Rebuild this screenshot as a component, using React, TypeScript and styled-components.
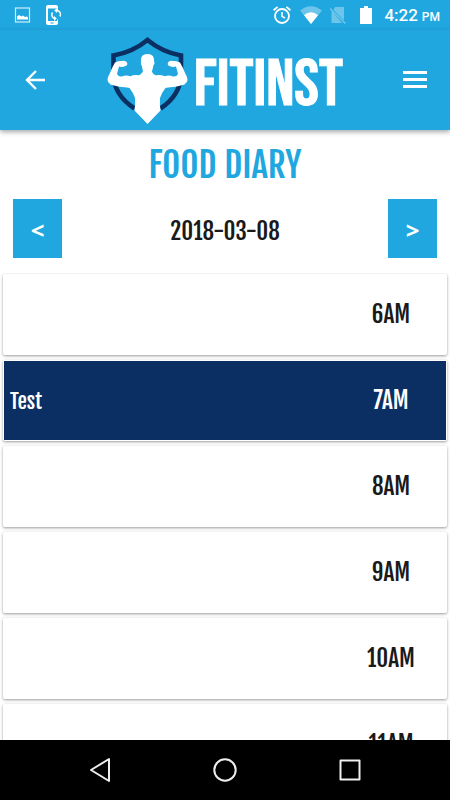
import React from "react";
import styled, { createGlobalStyle } from "styled-components";

const blue = "#20a7e0";
const navy = "#0b2f63";
const condensed = '"Fjalla One", "Liberation Sans Narrow", "Roboto", sans-serif';

const GlobalStyle = createGlobalStyle`
  * { box-sizing: border-box; }
  body { margin: 0; background: #fff; font-family: ${condensed}; color: #1a1a1a; }
  button { border: 0; padding: 0; background: none; color: inherit; font: inherit; cursor: pointer; }
  svg { display: block; }
`;

const Screen = styled.div`
  display: flex;
  flex-direction: column;
  height: 100vh;
  overflow: hidden;
`;

const StatusBar = styled.div`
  display: flex;
  justify-content: space-between;
  align-items: center;
  flex: none;
  height: 30px;
  padding: 0 10px 0 12px;
  background: ${blue};
  color: #fff;
`;

const StatusGroup = styled.div<{ $gap: number }>`
  display: flex;
  align-items: center;
  gap: ${(p) => p.$gap}px;
`;

const Clock = styled.time`
  margin-left: 4px;
  padding-top: 2px;
  font: 500 17px/28px "Roboto", sans-serif;
  white-space: nowrap;
`;

const Meridiem = styled.span`
  margin-left: 4px;
  font-size: 12px;
`;

const Header = styled.header`
  display: flex;
  align-items: center;
  justify-content: space-between;
  flex: none;
  height: 100px;
  padding: 0 15px;
  background: ${blue};
  color: #fff;
  box-shadow: 0 2px 5px rgba(0, 0, 0, 0.35);
  z-index: 1;
`;

const IconButton = styled.button`
  display: grid;
  place-items: center;
  width: 40px;
  height: 40px;
`;

const Brand = styled.div`
  display: flex;
  align-items: center;
  gap: 6px;
`;

const BrandName = styled.span`
  padding-top: 12px;
  font-family: "Bebas Neue", ${condensed};
  font-size: 66px;
  line-height: 80px;
  font-weight: 400;
  -webkit-text-stroke: 1px #fff;
`;

const Title = styled.h1`
  flex: none;
  margin: 0;
  padding-top: 12px;
  color: ${blue};
  font-size: 35px;
  line-height: 46px;
  font-weight: 400;
  text-align: center;
`;

const DateRow = styled.div`
  display: flex;
  align-items: center;
  justify-content: space-between;
  flex: none;
  padding: 11px 13px 15px;
`;

const StepButton = styled.button`
  width: 49px;
  height: 59px;
  padding-top: 2px;
  background: ${blue};
  color: #fff;
  font: 700 24px/57px "Open Sans", sans-serif;
`;

const CurrentDate = styled.time`
  padding-top: 6px;
  font-size: 23px;
  line-height: 32px;
`;

const Slots = styled.ul`
  display: flex;
  flex-direction: column;
  gap: 5px;
  flex: 1;
  min-height: 0;
  margin: 0;
  padding: 1px 3px 0;
  overflow-y: auto;
  scrollbar-width: none;
  list-style: none;
`;

const Slot = styled.li`
  flex: none;
  height: 81px;
  padding: 1px;
  border-radius: 2px;
  background: #fff;
  box-shadow: 0 1px 3px rgba(0, 0, 0, 0.4);
`;

const SlotBody = styled.div<{ $filled: boolean }>`
  display: flex;
  align-items: center;
  height: 100%;
  padding-left: 6px;
  background: ${(p) => (p.$filled ? navy : "#fff")};
  color: ${(p) => (p.$filled ? "#fff" : "#1a1a1a")};
`;

const Entry = styled.span`
  flex: 1;
  font-size: 21px;
  line-height: 32px;
`;

const Hour = styled.span`
  width: 110px;
  font-size: 23px;
  line-height: 32px;
  text-align: center;
`;

const NavBar = styled.nav`
  display: flex;
  align-items: center;
  justify-content: center;
  gap: 85px;
  flex: none;
  height: 60px;
  background: #000;
  z-index: 1;
`;

const slots = [
  { hour: "6AM", entry: "" },
  { hour: "7AM", entry: "Test" },
  { hour: "8AM", entry: "" },
  { hour: "9AM", entry: "" },
  { hour: "10AM", entry: "" },
  { hour: "11AM", entry: "" },
];

function PictureIcon() {
  return (
    <svg width="20" height="20" viewBox="0 0 20 20" aria-hidden="true">
      <rect x="3.5" y="3" width="14" height="14" fill="none" stroke="#fff" strokeOpacity=".8" strokeWidth="1.2" />
      <path d="M5 14.500v-3l2-1.500 2.500 1.500 1.500-1 2 1.500 2-.500 1 1v2z" fill="#fff" />
    </svg>
  );
}

function PhoneSyncIcon() {
  return (
    <svg width="20" height="22" viewBox="0 0 20 22" aria-hidden="true">
      <path d="M14 6V4.500H5v12.500h9V15.500h1V19q0 2-2 2H5q-2 0-2-2V3q0-2 2-2h8q2 0 2 2v3z" fill="#fff" />
      <path
        d="M13.500 6.500a4 4 0 0 1 3.500 6M11.500 14.500a4 4 0 0 1-2-6"
        fill="none"
        stroke="#fff"
        strokeWidth="1.500"
      />
      <path d="M14 4v5l-2.800-2.500zM11 12v5l2.800-2.500z" fill="#fff" />
      <path d="M7.500 19h3" stroke={blue} />
    </svg>
  );
}

function AlarmIcon() {
  return (
    <svg width="20" height="20" viewBox="0 0 20 20" fill="none" stroke="#fff" aria-hidden="true">
      <circle cx="10" cy="11" r="7" strokeWidth="1.800" />
      <path d="M10 7v4.300l3 1.700" strokeWidth="1.500" />
      <path d="M1.600 5.200 5.600 1.900M18.400 5.200l-4-3.300" strokeWidth="1.800" />
    </svg>
  );
}

function WifiIcon() {
  return (
    <svg width="22" height="20" viewBox="0 0 22 20" fill="#fff" aria-hidden="true">
      <path d="M0 5.500Q11-3 22 5.500L11 19z" opacity=".35" />
      <path d="M4 10.200q7-6 14 0L11 19z" />
    </svg>
  );
}

function NoSimIcon() {
  return (
    <svg width="18" height="20" viewBox="0 0 18 20" opacity=".35" aria-hidden="true">
      <path d="M5 2h9v13.200L3.500 5zM1.500 5.500 12 18H1.500z" fill="#fff" />
      <path d="M0 3.500 15.500 18.500" stroke="#fff" strokeWidth="1.500" />
    </svg>
  );
}

function BatteryIcon() {
  return (
    <svg width="12" height="20" viewBox="0 0 12 20" fill="#fff" aria-hidden="true">
      <path d="M4 1h4v2h4v16H0V3h4z" />
    </svg>
  );
}

function BrandMark() {
  return (
    <svg width="81" height="90" viewBox="0 0 81 90" aria-hidden="true">
      <path
        d="M27.500 73.500Q7 60 6.500 40V20.500Q26 17 40.500 5Q55 17 74 20.500V40Q73.500 60 53.500 73.500"
        fill="none"
        stroke={navy}
        strokeWidth="4.600"
      />
      <path
        d="M40.500 19c5 0 7 3 6.500 7.500 1 .5.500 3-.7 4-.3 3-1 4.500-1.300 6 .5 2 2 3.200 4 3.700q5.500-.700 8.500 1 5-1.500 8.500.300 3.500.500 5-2.500l-2-7.500q-3 1-6.500-.5-2.500-1-1.500-3.500 1.500-2.500 5-1.500 4-.5 7 1.500 3 5 5 10.500 2.500 4 2.500 7 0 2.500-3 4.500-8 2-11.500 2.500-6 .5-7.500 1-4 5-5.500 10-.5 7 .5 12.500L40.500 89 27.500 75.500q1-5.500.5-12.500-1.500-5-5.500-10-1.500-.5-7.500-1Q11 51.500 3.500 49.500.500 47.500.500 45q0-3 2.500-7 2-5.500 5-10.500 3-2 7-1.500 3.500-1 5 1.500 1 2.500-1.500 3.500-3.500 1.500-6.500.5l-2 7.500q1.500 3 5 2.500 3.500-1.800 8.500-.3 3-1.700 8.500-1 2-.5 4-3.700-.3-1.500-1.300-6-1.200-1-.7-4C33.500 22 35.500 19 40.500 19z"
        fill="#fff"
      />
    </svg>
  );
}

export default function App() {
  return (
    <>
      <GlobalStyle />
      <Screen>
        <StatusBar>
          <StatusGroup $gap={11}>
            <PictureIcon />
            <PhoneSyncIcon />
          </StatusGroup>
          <StatusGroup $gap={12}>
            <StatusGroup $gap={8}>
              <AlarmIcon />
              <WifiIcon />
              <NoSimIcon />
            </StatusGroup>
            <StatusGroup $gap={8}>
              <BatteryIcon />
              <Clock>
                4:22<Meridiem>PM</Meridiem>
              </Clock>
            </StatusGroup>
          </StatusGroup>
        </StatusBar>

        <Header>
          <IconButton aria-label="Back">
            <svg width="20" height="20" viewBox="0 0 20 20" fill="none" stroke="#fff" strokeWidth="2.400" aria-hidden="true">
              <path d="M20 10H2M11 1l-9 9 9 9" />
            </svg>
          </IconButton>
          <Brand>
            <BrandMark />
            <BrandName>FITINST</BrandName>
          </Brand>
          <IconButton aria-label="Menu">
            <svg width="24" height="18" viewBox="0 0 24 18" fill="#fff" aria-hidden="true">
              <path d="M0 0h24v3H0zM0 7h24v3H0zM0 14h24v3H0z" />
            </svg>
          </IconButton>
        </Header>

        <Title>FOOD DIARY</Title>
        <DateRow>
          <StepButton aria-label="Previous day">&lt;</StepButton>
          <CurrentDate dateTime="2018-03-08">2018-03-08</CurrentDate>
          <StepButton aria-label="Next day">&gt;</StepButton>
        </DateRow>

        <Slots>
          {slots.map((slot) => (
            <Slot key={slot.hour}>
              <SlotBody $filled={slot.entry !== ""}>
                <Entry>{slot.entry}</Entry>
                <Hour>{slot.hour}</Hour>
              </SlotBody>
            </Slot>
          ))}
        </Slots>

        <NavBar>
          <IconButton aria-label="System back">
            <svg width="24" height="26" viewBox="0 0 24 26" fill="none" stroke="#eee" strokeWidth="2" strokeLinejoin="round" aria-hidden="true">
              <path d="M21 2v22L3 13z" />
            </svg>
          </IconButton>
          <IconButton aria-label="Home">
            <svg width="26" height="26" viewBox="0 0 26 26" fill="none" stroke="#eee" strokeWidth="2" aria-hidden="true">
              <circle cx="13" cy="13" r="10.700" />
            </svg>
          </IconButton>
          <IconButton aria-label="Recent apps">
            <svg width="22" height="22" viewBox="0 0 22 22" fill="none" stroke="#eee" strokeWidth="2" strokeLinejoin="round" aria-hidden="true">
              <rect x="1.500" y="1.500" width="19" height="19" />
            </svg>
          </IconButton>
        </NavBar>
      </Screen>
    </>
  );
}
